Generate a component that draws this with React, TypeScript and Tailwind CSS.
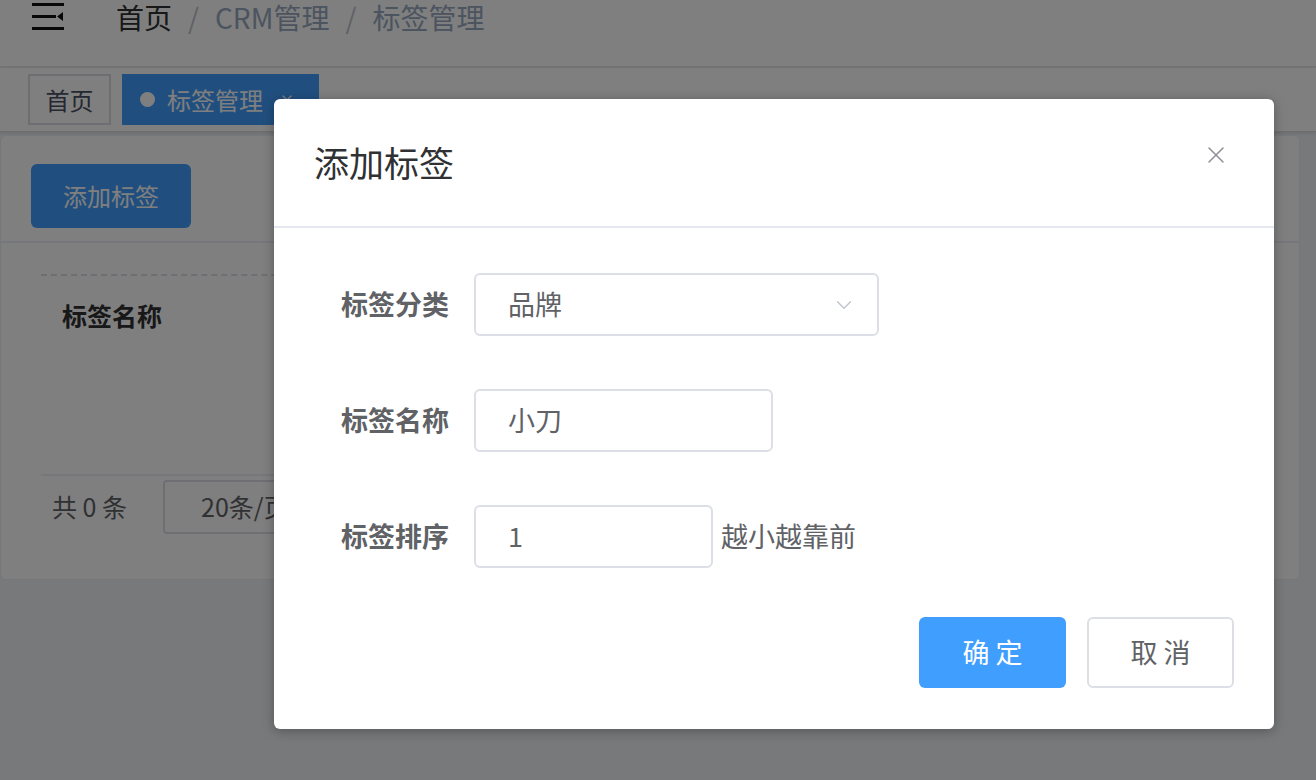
import { ChevronDown, X } from "lucide-react";

const font = {
  fontFamily: '"Noto Sans CJK SC", "Noto Sans", "Liberation Sans", sans-serif',
};

function MenuIcon() {
  return (
    <svg width="32" height="28" viewBox="0 0 32 28" className="mt-[2px] shrink-0">
      <rect x="0" y="1" width="32" height="3" fill="#111" />
      <rect x="0" y="13" width="24" height="3" fill="#111" />
      <polygon points="25,14.5 31,10 31,19" fill="#111" />
      <rect x="0" y="25" width="32" height="3" fill="#111" />
    </svg>
  );
}

function Background() {
  return (
    <div className="flex h-[780px] w-full flex-col bg-[#f0f2f5]">
      {/* Navbar */}
      <div className="flex h-[66px] items-start gap-[52px] bg-white pl-8 shadow-[0_1px_4px_rgba(0,21,41,0.08)]">
        <MenuIcon />
        <div className="flex items-center gap-[16px] pt-[1px] text-[28px] leading-[32px] text-[#97a8be]">
          <span className="text-[#303133]">首页</span>
          <span className="text-[#c0c4cc]">/</span>
          <span>CRM管理</span>
          <span className="text-[#c0c4cc]">/</span>
          <span>标签管理</span>
        </div>
      </div>

      {/* Tags view */}
      <div className="mt-[2px] flex h-[64px] items-start gap-[11px] border-b border-[#d8dce5] bg-white pl-7 pt-[6px] shadow-[0_1px_3px_rgba(0,0,0,0.12)]">
        <div className="flex h-[51px] w-[83px] items-center justify-center border-2 border-[#d8dce5] text-[24px] text-[#495060]">
          首页
        </div>
        <div className="flex h-[51px] w-[197px] items-center gap-3 bg-[#409eff] pl-[18px] text-[24px] text-white">
          <span className="h-[15px] w-[15px] rounded-full bg-white" />
          标签管理
          <X size={16} strokeWidth={2} className="ml-1" />
        </div>
      </div>

      {/* Card */}
      <div className="mr-4 mt-[3px] flex h-[445px] flex-col rounded-md border border-[#ebeef5] bg-white">
        <div className="flex h-[107px] items-start border-b-2 border-[#ebeef5] pl-[30px] pt-[28px]">
          <div className="flex h-[64px] w-[160px] items-center justify-center rounded-md bg-[#409eff] text-[24px] text-white">
            添加标签
          </div>
        </div>
        <div className="flex flex-1 flex-col px-10 pt-[31px]">
          <div className="border-t-2 border-dashed border-[#dcdfe6]" />
          <div className="pl-[21px] pt-[20px] text-[25px] font-bold leading-[38px] text-[#303133]">
            标签名称
          </div>
          <div className="mt-[140px] border-t-2 border-[#ebeef5]" />
          <div className="mt-[4px] flex items-center gap-[36px] pl-[11px]">
            <span className="text-[25px] text-[#606266]">共 0 条</span>
            <div className="flex h-[54px] w-[220px] items-center rounded border-2 border-[#dcdfe6] pl-9 text-[25px] text-[#606266]">
              20条/页
            </div>
          </div>
        </div>
      </div>
    </div>
  );
}

function Field({
  label,
  value,
  width,
  select,
  hint,
}: {
  label: string;
  value: string;
  width: string;
  select?: boolean;
  hint?: string;
}) {
  return (
    <div className="flex items-center">
      <div className="w-[160px] pr-[25px] text-right text-[27px] font-semibold text-[#606266]">
        {label}
      </div>
      <div
        className={`flex h-[63px] items-center justify-between rounded-md border-2 border-[#dcdfe6] pl-8 pr-5 text-[27px] text-[#606266] ${width}`}
      >
        <span>{value}</span>
        {select && (
          <ChevronDown size={26} strokeWidth={1.25} className="text-[#c0c4cc]" />
        )}
      </div>
      {hint && (
        <span className="ml-2 text-[27px] text-[#606266]">{hint}</span>
      )}
    </div>
  );
}

export default function App() {
  return (
    <div className="relative h-[780px] w-[1316px] overflow-hidden" style={font}>
      <Background />

      {/* Dialog overlay */}
      <div className="absolute inset-0 bg-black/50">
        <div className="ml-[274px] mt-[99px] flex h-[630px] w-[1000px] flex-col rounded-md bg-white shadow-[0_2px_12px_rgba(0,0,0,0.3)]">
          <div className="flex h-[129px] items-center justify-between border-b-2 border-[#e4e7ed] pl-10 pr-[44px]">
            <span className="text-[35px] text-[#303133]">添加标签</span>
            <X size={28} strokeWidth={1.3} className="-mt-4 text-[#909399]" />
          </div>

          <div className="flex flex-col gap-[53px] px-10 pt-[45px]">
            <Field label="标签分类" value="品牌" width="w-[405px]" select />
            <Field label="标签名称" value="小刀" width="w-[299px]" />
            <Field label="标签排序" value="1" width="w-[239px]" hint="越小越靠前" />
          </div>

          <div className="flex justify-end gap-[21px] pr-10 pt-[49px]">
            <div className="flex h-[71px] w-[147px] items-center justify-center rounded-md bg-[#409eff] text-[27px] text-white">
              确 定
            </div>
            <div className="flex h-[71px] w-[147px] items-center justify-center rounded-md border-2 border-[#dcdfe6] bg-white text-[27px] text-[#606266]">
              取 消
            </div>
          </div>
        </div>
      </div>
    </div>
  );
}
